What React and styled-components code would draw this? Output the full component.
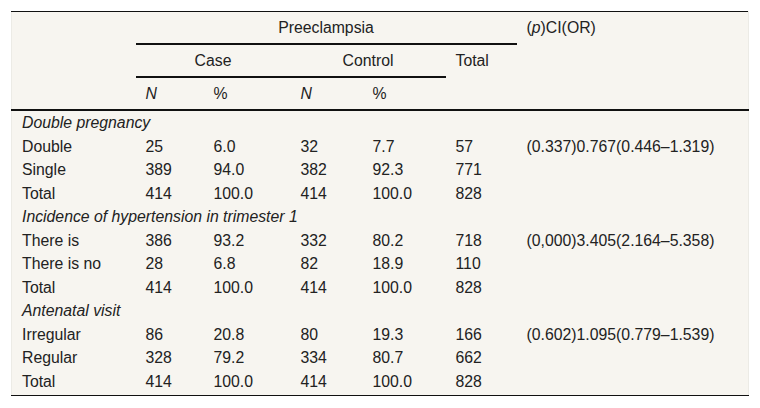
import styled, { createGlobalStyle } from "styled-components";

const rows = [
  { group: "Double pregnancy" },
  { label: "Double", n1: "25", p1: "6.0", n2: "32", p2: "7.7", total: "57", ci: "(0.337)0.767(0.446–1.319)" },
  { label: "Single", n1: "389", p1: "94.0", n2: "382", p2: "92.3", total: "771" },
  { label: "Total", n1: "414", p1: "100.0", n2: "414", p2: "100.0", total: "828" },
  { group: "Incidence of hypertension in trimester 1" },
  { label: "There is", n1: "386", p1: "93.2", n2: "332", p2: "80.2", total: "718", ci: "(0,000)3.405(2.164–5.358)" },
  { label: "There is no", n1: "28", p1: "6.8", n2: "82", p2: "18.9", total: "110" },
  { label: "Total", n1: "414", p1: "100.0", n2: "414", p2: "100.0", total: "828" },
  { group: "Antenatal visit" },
  { label: "Irregular", n1: "86", p1: "20.8", n2: "80", p2: "19.3", total: "166", ci: "(0.602)1.095(0.779–1.539)" },
  { label: "Regular", n1: "328", p1: "79.2", n2: "334", p2: "80.7", total: "662" },
  { label: "Total", n1: "414", p1: "100.0", n2: "414", p2: "100.0", total: "828" },
];

const App = () => {
  return (
    <Wrapper>
      <GlobalStyle />
      <Table>
        <colgroup>
          <col style={{ width: 124 }} />
          <col style={{ width: 68 }} />
          <col style={{ width: 87 }} />
          <col style={{ width: 72 }} />
          <col style={{ width: 83 }} />
          <col style={{ width: 71 }} />
          <col />
        </colgroup>
        <thead>
          <tr>
            <Th rowSpan={3} />
            <Th colSpan={5} $center $rule>
              Preeclampsia
            </Th>
            <Th rowSpan={3} $top>
              (<i>p</i>)CI(OR)
            </Th>
          </tr>
          <tr>
            <Th colSpan={2} $center $rule>
              Case
            </Th>
            <Th colSpan={2} $center $rule>
              Control
            </Th>
            <Th rowSpan={2} $top>
              Total
            </Th>
          </tr>
          <tr>
            <Th>
              <i>N</i>
            </Th>
            <Th>%</Th>
            <Th>
              <i>N</i>
            </Th>
            <Th>%</Th>
          </tr>
        </thead>
        <tbody>
          {rows.map((r, i) =>
            r.group ? (
              <tr key={i}>
                <GroupCell colSpan={7}>{r.group}</GroupCell>
              </tr>
            ) : (
              <tr key={i}>
                <Td>{r.label}</Td>
                <Td>{r.n1}</Td>
                <Td>{r.p1}</Td>
                <Td>{r.n2}</Td>
                <Td>{r.p2}</Td>
                <Td>{r.total}</Td>
                <Td>{r.ci || ""}</Td>
              </tr>
            )
          )}
        </tbody>
      </Table>
    </Wrapper>
  );
};

const GlobalStyle = createGlobalStyle`
  body {
    margin: 0;
    background: #ffffff;
    font-family: "Liberation Sans", Arial, sans-serif;
  }
`;

const Wrapper = styled.div`
  padding: 11px 11px 0 11px;
`;

const Table = styled.table`
  width: 738px;
  border-collapse: collapse;
  table-layout: fixed;
  background: #f7f5f0;
  color: #222;
  font-size: 15.8px;
  border-top: 1px solid #111;
  border-bottom: 1px solid #111;
  border-left: 1px solid #ecebe6;
  border-right: 1px solid #ecebe6;

  tbody tr:first-child td {
    border-top: 2px solid #111;
  }

  tbody tr:last-child td {
    padding-bottom: 4px;
  }
`;

const Th = styled.th`
  font-weight: 400;
  text-align: ${(p) => (p.$center ? "center" : "left")};
  vertical-align: ${(p) => (p.$top ? "top" : "middle")};
  padding: 6px 10px;
  line-height: 19px;
  border-bottom: ${(p) => (p.$rule ? "2px solid #111" : "none")};
  white-space: nowrap;

  i {
    font-style: italic;
  }
`;

const Td = styled.td`
  padding: 2px 10px;
  line-height: 19.5px;
  text-align: left;
  white-space: nowrap;
`;

const GroupCell = styled(Td)`
  font-style: italic;
`;

export default App;
